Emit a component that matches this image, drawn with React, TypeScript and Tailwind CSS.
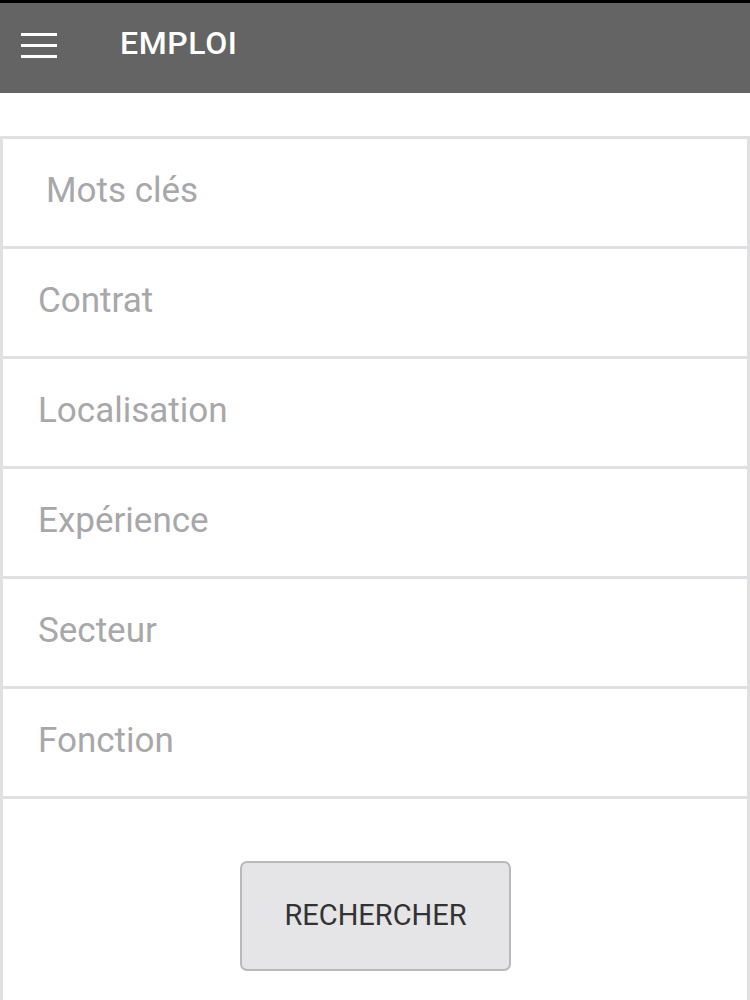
const fields = ["Mots clés", "Contrat", "Localisation", "Expérience", "Secteur", "Fonction"];

export default function App() {
  return (
    <div className="w-[750px] h-[1000px] bg-white overflow-hidden font-['Roboto',sans-serif]">
      {/* Top bar */}
      <div className="border-t-[3px] border-black bg-[#656465] h-[93px] flex items-center">
        <div className="w-[36px] ml-[21px] flex flex-col gap-[8px] -mt-[5px]">
          <div className="h-[3px] bg-white" />
          <div className="h-[3px] bg-white" />
          <div className="h-[3px] bg-white" />
        </div>
        <h1 className="ml-[63px] -mt-[10px] text-[32px] font-medium text-white tracking-[0.6px]">EMPLOI</h1>
      </div>

      {/* Search form */}
      <div className="mt-[43px] border-x-[3px] border-[#e0dfe2]">
        {fields.map((f, i) => (
          <div
            key={f}
            className="h-[110px] border-t-[3px] border-[#e0dfe2] flex items-center"
          >
            <span className={`-mt-[3px] text-[35px] text-[#a8a7aa] ${i === 0 ? "pl-[43px]" : "pl-[35px]"}`}>{f}</span>
          </div>
        ))}
        <div className="border-t-[3px] border-[#e0dfe2] pt-[62px] pb-[40px] flex justify-center">
          <button className="w-[271px] h-[110px] bg-[#e5e4e7] border-2 border-[#b9b8bb] rounded-[7px] text-[29px] text-[#333] ml-[1px]">
            RECHERCHER
          </button>
        </div>
      </div>
    </div>
  );
}
